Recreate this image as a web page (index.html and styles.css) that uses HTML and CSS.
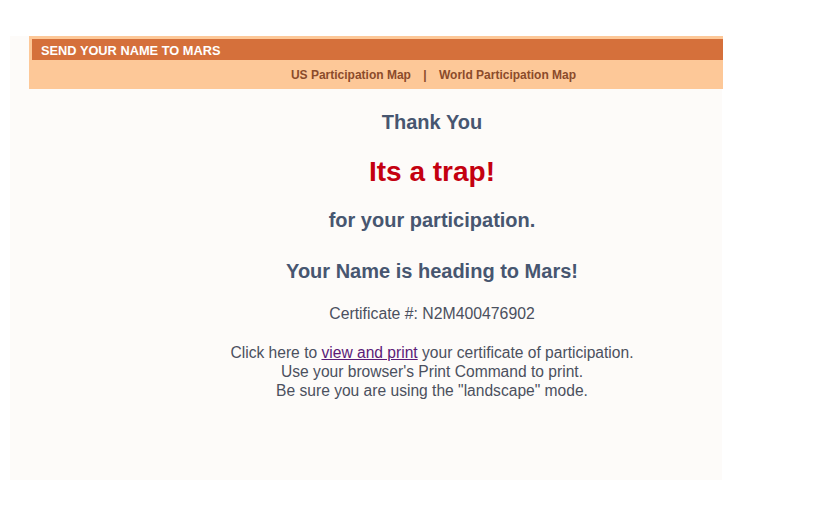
FILE: index.html
```html
<!DOCTYPE html>
<html>
<head>
<meta charset="utf-8">
<link rel="stylesheet" href="styles.css">
</head>
<body>
<div class="page">
  <div class="header">
    <div class="title">SEND YOUR NAME TO MARS</div>
    <div class="nav">
      <a class="nav-link" href="#">US Participation Map</a>
      <span class="sep">|</span>
      <a class="nav-link" href="#">World Participation Map</a>
    </div>
  </div>
  <div class="content">
    <div class="thanks">Thank You</div>
    <div class="trap">Its a trap!</div>
    <div class="for">for your participation.</div>
    <div class="heading">Your Name is heading to Mars!</div>
    <div class="cert">Certificate #: N2M400476902</div>
    <div class="info">
      Click here to <a class="print-link" href="#">view and print</a> your certificate of participation.<br>
      Use your browser's Print Command to print.<br>
      Be sure you are using the "landscape" mode.
    </div>
  </div>
</div>
</body>
</html>
```
FILE: styles.css
```css
html, body {
  margin: 0;
  padding: 0;
  background: #ffffff;
}
body {
  font-family: "Liberation Sans", Arial, sans-serif;
}
.page {
  margin: 36px 0 0 10px;
  width: 712px;
  height: 444px;
  background: #fdfbf9;
  box-sizing: border-box;
}
.header {
  margin-left: 19px;
  width: 694px;
  background: #fdc898;
  padding: 3px 0 0 3px;
  box-sizing: border-box;
}
.title {
  height: 21px;
  background: #d5703b;
  color: #ffffff;
  font-weight: bold;
  font-size: 12.8px;
  line-height: 23px;
  padding-left: 9px;
  overflow: hidden;
}
.nav {
  height: 29px;
  line-height: 31px;
  font-size: 12px;
  font-weight: bold;
  color: #8b4b2b;
  text-align: center;
  padding-left: 112px;
}
.nav-link {
  color: #8b4b2b;
  text-decoration: none;
}
.sep {
  margin: 0 9px;
}
.content {
  padding: 22px 0 0 132px;
  text-align: center;
  color: #475670;
}
.thanks, .for, .heading {
  font-size: 20px;
  font-weight: bold;
  line-height: 23px;
}
.trap {
  margin-top: 22px;
  font-size: 28px;
  font-weight: bold;
  line-height: 32px;
  color: #c40010;
}
.for {
  margin-top: 21px;
}
.heading {
  margin-top: 28px;
}
.cert {
  margin-top: 21px;
  font-size: 15.8px;
  line-height: 19px;
  color: #4b505e;
}
.info {
  margin-top: 20px;
  font-size: 15.6px;
  line-height: 19px;
  color: #4b505e;
}
.print-link {
  color: #5a1a78;
  text-decoration: underline;
}
```
